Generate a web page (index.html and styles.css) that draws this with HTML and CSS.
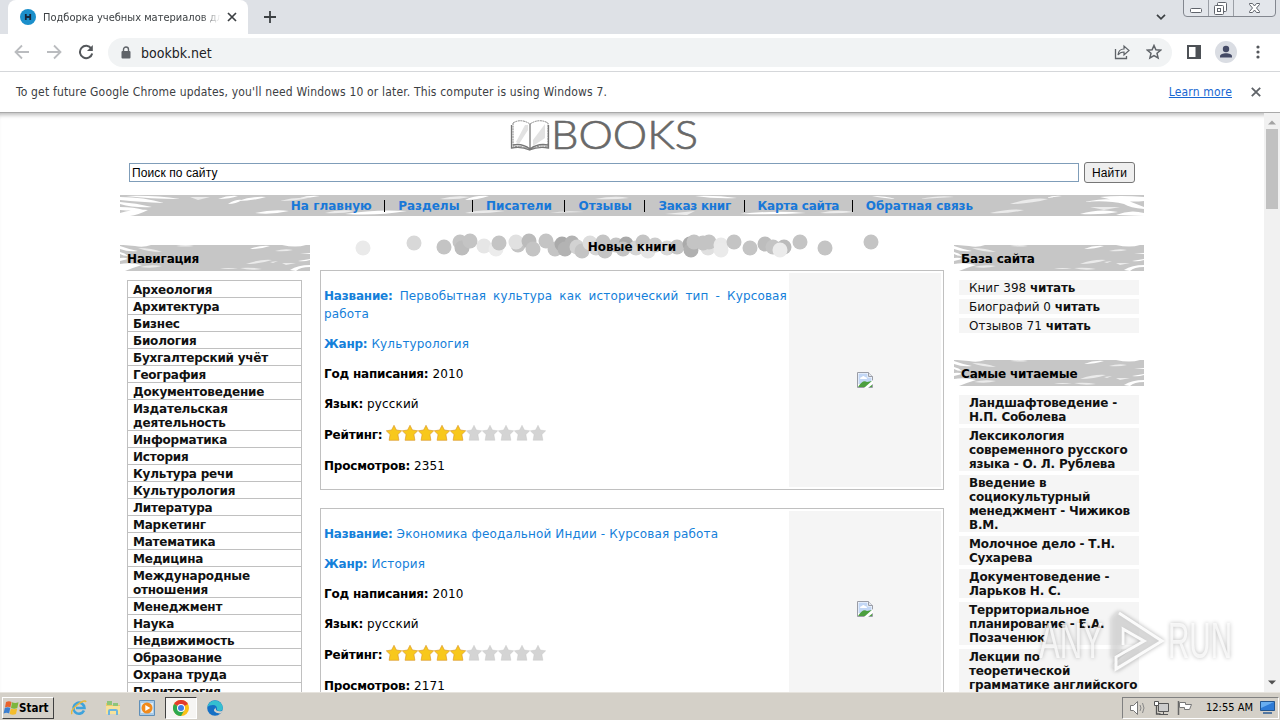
FILE: index.html
```html
<!DOCTYPE html>
<html lang="ru">
<head>
    <meta charset="UTF-8">
    <title>Подборка учебных материалов</title>
    <link rel="stylesheet" href="styles.css">
</head>
<body>
<svg class="defs" width="0" height="0">
    <symbol id="brush" viewBox="0 0 190 26" preserveAspectRatio="none">
        <rect width="190" height="26" fill="#c6c6c6"/>
        <g fill="#fff">
            <path d="M0 1q8 3 18 5-10 1-18-2zM0 7q5 1 8 4-5 0-8-2zM0 13q5-1 8 1l-8 2zM0 19q10-2 22 1-10 3-17 6H0zM3 0h28q-8 3-16 1zM0 22l12-1-8 5H0z"/>
            <path d="M130 4q10-4 20-3-9 3-20 3zM162 0h24q-10 3-24 0zM170 25q8-5 20-5v2q-10 0-14 4zM178 16l12-2v1q-6 2-12 1zM180 9l10-1v1z"/>
        </g>
        <g fill="#ebebeb">
            <path d="M18 3q14 0 24 4-14 0-24-4zM20 22q10-3 22-1-10 3-22 1zM56 1q10-2 18 0-9 1-18 0zM126 19q14-5 26-4-12 4-26 4zM120 23q12-1 22 1-12 2-22-1zM155 6q10-3 18-1-8 2-18 1zM162 18h14l-10 2zM100 24q8-2 18 0zM150 17l8-1-5 2z"/>
        </g>
    </symbol>
    <symbol id="star" viewBox="0 0 16 16">
        <path d="M8 .3l2.400 4.700 5.300.8-3.800 3.700 1 5.800H3.100l1-5.800L.3 5.800 5.600 5z"/>
    </symbol>
    <symbol id="broken" viewBox="0 0 16 16">
        <path d="M.5.5h11l4 4v11H.5z" fill="#fff" stroke="#9a9da6"/>
        <path d="M1.500 1.500h9v4h4V12h-13z" fill="#c3d7f5"/>
        <path d="M3 7q0-2 2-2 1-2 3 0 2 0 2 2z" fill="#fff"/>
        <path d="M1 15q5-8 9-5l5-1v6z" fill="#4c9f3f"/>
        <path d="M7 16l9-8v4l-5 4z" fill="#fff"/>
        <path d="M11.500.5v4h4" fill="#e5e8ee" stroke="#9a9da6"/>
    </symbol>
</svg>

<div class="tabstrip">
    <div class="tab">
        <svg class="favicon" viewBox="0 0 16 16"><circle cx="8" cy="8" r="8" fill="#1b8fcb"/><path d="M5.800 5v6M10.200 5v6M5.800 8h5" stroke="#14263c" stroke-width="1.800"/></svg>
        <span class="tab-title">Подборка учебных материалов для</span>
        <svg class="tab-close" viewBox="0 0 10 10"><path d="M1 1l8 8M9 1l-8 8" stroke="#3c4043" stroke-width="1.700"/></svg>
    </div>
    <svg class="new-tab" viewBox="0 0 12 12"><path d="M6 0v12M0 6h12" stroke="#3c4043" stroke-width="1.800"/></svg>
    <svg class="tab-search" viewBox="0 0 10 6"><path d="M1 .8l4 4 4-4" fill="none" stroke="#3c4043" stroke-width="1.700"/></svg>
    <svg class="win-controls" viewBox="0 0 94 18">
        <path d="M.5 0v13q0 3.500 3.500 3.500h85q3.500 0 3.500-3.500V0" fill="#e3e6eb" stroke="#83878f"/>
        <path d="M25.500 0v16M50.500 0v16" stroke="#9b9fa6"/>
        <g fill="#fff" stroke="#60646c">
            <rect x="7.500" y="8.500" width="11" height="4" rx="1"/>
            <rect x="34.500" y="2.500" width="9" height="9" rx="1"/>
            <rect x="31.500" y="5.500" width="9" height="9" rx="1"/>
            <rect x="34.500" y="8.500" width="3" height="3"/>
            <path d="M66.500 3.500h3l2 2.500 2-2.500h3v1l-3 3.500 3 3.500v1h-3l-2-2.500-2 2.500h-3v-1l3-3.500-3-3.500z"/>
        </g>
    </svg>
</div>

<div class="toolbar">
    <svg class="tool" viewBox="0 0 16 16"><path d="M15 8H2M8 1.500L1.500 8 8 14.500" fill="none" stroke="#babcbf" stroke-width="1.800"/></svg>
    <svg class="tool" viewBox="0 0 16 16"><path d="M1 8h13M8 1.500L14.500 8 8 14.500" fill="none" stroke="#babcbf" stroke-width="1.800"/></svg>
    <svg class="tool" viewBox="0 0 16 16"><path d="M13.300 4.500A6.200 6.200 0 1 0 14.200 9.500" fill="none" stroke="#54575b" stroke-width="2"/><path d="M14.800 1v6H9z" fill="#54575b"/></svg>
    <div class="omnibox">
        <svg class="lock" viewBox="0 0 10 13"><rect x="0.500" y="5" width="9" height="7.500" rx="1" fill="#5f6368"/><path d="M2.500 5V3.500a2.500 2.500 0 0 1 5 0V5" fill="none" stroke="#5f6368" stroke-width="1.400"/></svg>
        <span class="url">bookbk.net</span>
        <svg class="share" viewBox="0 0 16 16"><path d="M1.500 5v9.500h11V12" fill="none" stroke="#5f6368" stroke-width="1.300"/><path d="M4 11q.5-6 6-6V2l5 4.500-5 4.500V8Q6 8 4 11z" fill="none" stroke="#5f6368" stroke-width="1.200"/></svg>
        <svg class="mark" viewBox="0 0 16 16"><path d="M8 1.500l1.900 4.300 4.700.4-3.600 3.100 1.100 4.600L8 11.500l-4.100 2.400L5 9.300 1.400 6.200l4.700-.4z" fill="none" stroke="#5f6368" stroke-width="1.500"/></svg>
    </div>
    <svg class="panel" viewBox="0 0 14 14"><path d="M1 1h12v12H1z" fill="none" stroke="#4d5156" stroke-width="2"/><path d="M8.500 0H14v14H8.500z" fill="#4d5156"/></svg>
    <svg class="avatar" viewBox="0 0 22 22"><circle cx="11" cy="11" r="11" fill="#dadde3"/><circle cx="11" cy="8" r="3.200" fill="#454b66"/><path d="M5 16.500v-1.200c0-2 3-3 6-3s6 1 6 3v1.200z" fill="#454b66"/></svg>
    <svg class="dots" viewBox="0 0 4 14"><g fill="#54575b"><circle cx="2" cy="2" r="1.600"/><circle cx="2" cy="7" r="1.600"/><circle cx="2" cy="12" r="1.600"/></g></svg>
</div>

<div class="infobar">
    <span class="info-text">To get future Google Chrome updates, you'll need Windows 10 or later. This computer is using Windows 7.</span>
    <a class="info-link">Learn more</a>
    <svg class="info-close" viewBox="0 0 10 10"><path d="M.8.8l8.400 8.400M9.200.8L.8 9.200" stroke="#5f6368" stroke-width="1.800"/></svg>
</div>

<div class="viewport">
    <div class="page">
        <svg class="logo" viewBox="0 0 190 36">
            <path d="M3 5q8-5 17 1 9-6 18-1v24q-9-3-18 3-8-5-17-3z" fill="#fff" stroke="#888" stroke-width="1" stroke-dasharray="2 .6"/>
            <path d="M20 6v24M3 27q9-2 17 4 8-6 18-4M1.500 7v23q10-2 18 2 9-4 19-2V7" fill="none" stroke="#777" stroke-width="1.300"/>
            <path d="M23 22L35 6v14L23 28zM6 24l9-17h3v5L9 26z" fill="#e2e2e2"/>
            <text x="41" y="31" textLength="147" lengthAdjust="spacingAndGlyphs">BOOKS</text>
        </svg>

        <form class="search">
            <input class="search-field" type="text" value="Поиск по сайту">
            <button class="search-button" type="button">Найти</button>
        </form>

        <div class="menu">
            <svg class="menu-bg" viewBox="0 0 1024 21">
                <rect width="1024" height="21" fill="#c6c6c6"/>
                <g fill="#fff">
                    <path d="M0 2q24 0 44 6-24-1-44-3zM0 7q16 1 32 5-18 1-32-3zM0 12q14 0 24 3-12 1-24 0zM0 18q16-5 28-3-10 5-18 6H0zM6 1q28-1 54 3-30 0-54-3z"/>
                    <path d="M98 4q10-4 20-3-8 3-20 3zM108 9q8-5 14-4-6 4-14 4zM118 6q14-5 28-4-14 4-28 4zM180 3q8-3 20-2-10 2-20 2zM135 18q18-4 34-2-18 4-34 2zM225 19q30-5 62-3-30 5-62 3zM345 5q10-5 24-4-12 4-24 4zM575 1q20-1 42 2-22 1-42-2zM620 19q34-4 66-1-30 2-66 1zM752 1q14 0 24 3-14-1-24-3zM926 3q8-3 16-2zM960 19q20-6 38-2-16 3-38 2zM964 7q24-5 42-2l18 7v2q-14-1-20-5-16-4-40-2zM980 2q20-2 44 0v4q-20 2-44-4zM996 20q14-6 28-2v3z"/>
                </g>
                <g fill="#ebebeb">
                    <path d="M70 2h20l-12 3zM160 6q14-4 28-3-12 3-28 3zM205 18q14-4 30-2-14 3-30 2zM320 4q14-4 30-2-14 3-30 2zM345 18q16-4 40-2-20 3-40 2zM430 18q16-3 34-1zM475 4q20-4 34-1-16 2-34 1zM545 19l30-3-8 4zM700 18q16-4 34-1-16 2-34 1zM800 4q20-4 34-2zM890 9q22-7 38-5-18 5-38 5zM870 18q20-5 34-3-16 4-34 3zM970 12h30l-16 3z"/>
                </g>
            </svg>
            <a>На главную</a><i></i><a>Разделы</a><i></i><a>Писатели</a><i></i><a>Отзывы</a><i></i><a class="tight">Заказ книг</a><i></i><a class="tight">Карта сайта</a><i></i><a>Обратная связь</a>
        </div>

        <div class="columns">
            <div class="left">
                <div class="title"><svg class="title-bg"><use href="#brush"/></svg><span>Навигация</span></div>
                <ul class="nav">
                    <li>Археология</li>
                    <li>Архитектура</li>
                    <li>Бизнес</li>
                    <li>Биология</li>
                    <li>Бухгалтерский учёт</li>
                    <li>География</li>
                    <li>Документоведение</li>
                    <li>Издательская<br>деятельность</li>
                    <li>Информатика</li>
                    <li>История</li>
                    <li>Культура речи</li>
                    <li>Культурология</li>
                    <li>Литература</li>
                    <li>Маркетинг</li>
                    <li>Математика</li>
                    <li>Медицина</li>
                    <li>Международные<br>отношения</li>
                    <li>Менеджмент</li>
                    <li>Наука</li>
                    <li>Недвижимость</li>
                    <li>Образование</li>
                    <li>Охрана труда</li>
                    <li>Политология</li>
                </ul>
            </div>

            <div class="center">
                <div class="new-books">
                    <svg class="bubbles" viewBox="0 0 624 30">
                        <g fill="#c4c4c4">
                            <circle cx="94" cy="13" r="7.500" fill="#d8d8d8"/><circle cx="43" cy="18" r="7.500" fill="#eaeaea"/>
                            <circle cx="164" cy="16" r="7.500" fill="#e6e6e6"/><circle cx="176" cy="19" r="7.500" fill="#ececec"/>
                            <circle cx="124" cy="17" r="7.500"/><circle cx="140" cy="12" r="7.500"/><circle cx="142" cy="18" r="7.500" fill="#bdbdbd"/><circle cx="150" cy="11" r="7.500"/>
                            <circle cx="179" cy="13" r="7.500"/><circle cx="198" cy="15" r="7.500"/><circle cx="196" cy="12" r="7.500" fill="#e1e1e1"/><circle cx="209" cy="11" r="7.500" fill="#bbb"/><circle cx="213" cy="19" r="7.500"/>
                            <circle cx="226" cy="11" r="7.500"/><circle cx="235" cy="19" r="7.500"/><circle cx="242" cy="14" r="7.500" fill="#aaa"/><circle cx="252" cy="13" r="7.500" fill="#b3b3b3"/><circle cx="245" cy="19" r="7.500" fill="#b3b3b3"/><circle cx="257" cy="17" r="7.500" fill="#d2d2d2"/>
                            <circle cx="262" cy="21" r="7.500"/><circle cx="270" cy="13" r="7.500" fill="#ddd"/><circle cx="276" cy="18" r="7.500" fill="#d5d5d5"/><circle cx="283" cy="12" r="7.500"/><circle cx="285" cy="21" r="7.500"/><circle cx="296" cy="15" r="7.500"/><circle cx="306" cy="14" r="7.500" fill="#aaa"/><circle cx="303" cy="19" r="7.500"/>
                            <circle cx="316" cy="18" r="7.500" fill="#d5d5d5"/><circle cx="323" cy="12" r="7.500"/><circle cx="328" cy="21" r="7.500" fill="#e4e4e4"/><circle cx="335" cy="15" r="7.500" fill="#ccc"/><circle cx="347" cy="18" r="7.500" fill="#d8d8d8"/><circle cx="357" cy="17" r="7.500"/>
                            <circle cx="370" cy="14" r="7.500" fill="#aaa"/><circle cx="371" cy="20" r="7.500" fill="#b0b0b0"/><circle cx="374" cy="12" r="7.500"/><circle cx="388" cy="18" r="7.500" fill="#e0e0e0"/><circle cx="383" cy="13" r="7.500"/><circle cx="389" cy="12" r="7.500"/><circle cx="401" cy="15" r="7.500" fill="#e9e9e9"/><circle cx="401" cy="20" r="7.500" fill="#eaeaea"/>
                            <circle cx="414" cy="12" r="7.500"/><circle cx="430" cy="18" r="7.500"/><circle cx="445" cy="14" r="7.500" fill="#bdbdbd"/><circle cx="453" cy="17" r="7.500"/><circle cx="464" cy="17" r="7.500" fill="#bbb"/><circle cx="460" cy="20" r="7.500" fill="#ebebeb"/><circle cx="480" cy="12" r="7.500"/><circle cx="505" cy="18" r="7.500"/><circle cx="551" cy="12" r="7.500"/>
                        </g>
                    </svg>
                    <span>Новые книги</span>
                </div>

                <div class="book">
                    <div class="book-text">
                        <p class="link"><b>Название:</b> Первобытная культура как исторический тип - Курсовая работа</p>
                        <p class="link"><b>Жанр:</b> Культурология</p>
                        <p><b>Год написания:</b> 2010</p>
                        <p><b>Язык:</b> русский</p>
                        <p class="rating"><b>Рейтинг:</b>
                            <svg class="stars" viewBox="0 0 160 16"><g class="on"><use href="#star" width="16"/><use href="#star" x="16" width="16"/><use href="#star" x="32" width="16"/><use href="#star" x="48" width="16"/><use href="#star" x="64" width="16"/></g><g class="off"><use href="#star" x="80" width="16"/><use href="#star" x="96" width="16"/><use href="#star" x="112" width="16"/><use href="#star" x="128" width="16"/><use href="#star" x="144" width="16"/></g></svg>
                        </p>
                        <p><b>Просмотров:</b> 2351</p>
                    </div>
                    <div class="cover"><svg class="broken"><use href="#broken"/></svg></div>
                </div>

                <div class="book">
                    <div class="book-text">
                        <p class="link"><b>Название:</b> Экономика феодальной Индии - Курсовая работа</p>
                        <p class="link"><b>Жанр:</b> История</p>
                        <p><b>Год написания:</b> 2010</p>
                        <p><b>Язык:</b> русский</p>
                        <p class="rating"><b>Рейтинг:</b>
                            <svg class="stars" viewBox="0 0 160 16"><g class="on"><use href="#star" width="16"/><use href="#star" x="16" width="16"/><use href="#star" x="32" width="16"/><use href="#star" x="48" width="16"/><use href="#star" x="64" width="16"/></g><g class="off"><use href="#star" x="80" width="16"/><use href="#star" x="96" width="16"/><use href="#star" x="112" width="16"/><use href="#star" x="128" width="16"/><use href="#star" x="144" width="16"/></g></svg>
                        </p>
                        <p><b>Просмотров:</b> 2171</p>
                    </div>
                    <div class="cover"><svg class="broken"><use href="#broken"/></svg></div>
                </div>
            </div>

            <div class="right">
                <div class="title"><svg class="title-bg"><use href="#brush"/></svg><span>База сайта</span></div>
                <ul class="list">
                    <li>Книг 398 <b>читать</b></li>
                    <li>Биографий 0 <b>читать</b></li>
                    <li>Отзывов 71 <b>читать</b></li>
                </ul>
                <div class="title"><svg class="title-bg"><use href="#brush"/></svg><span>Самые читаемые</span></div>
                <ul class="list popular">
                    <li>Ландшафтоведение -<br>Н.П. Соболева</li>
                    <li>Лексикология<br>современного русского<br>языка - О. Л. Рублева</li>
                    <li>Введение в<br>социокультурный<br>менеджмент - Чижиков<br>В.М.</li>
                    <li>Молочное дело - Т.Н.<br>Сухарева</li>
                    <li>Документоведение -<br>Ларьков Н. С.</li>
                    <li>Территориальное<br>планирование - Е.А.<br>Позаченюк</li>
                    <li>Лекции по<br>теоретической<br>грамматике английского<br>языка</li>
                </ul>
            </div>
        </div>
    </div>
    <div class="scrollbar">
        <svg class="arrow" viewBox="0 0 8 5"><path d="M0 4.500L4 .5l4 4z" fill="#a3a3a3"/></svg>
        <div class="thumb"></div>
        <svg class="arrow down" viewBox="0 0 8 5"><path d="M0 .5h8l-4 4z" fill="#505050"/></svg>
    </div>
</div>

<div class="taskbar">
    <div class="start">
        <svg class="flag" viewBox="0 0 16 16"><path d="M3 2q3-1.500 5.500 0L7.400 7.500Q5 6 2 7.500z" fill="#e8622c"/><path d="M9 2.200q3 1.500 6.500 0L14.300 8q-3 1.500-6.300 0z" fill="#7db63c"/><path d="M1.800 8q3-1.500 5.500 0l-1.200 5.500q-2.500-1.500-5.500 0z" fill="#3c7fd0"/><path d="M7.800 8.500q3 1.500 6.400 0L13 14q-3 1.500-6.400 0z" fill="#f4bd2c"/></svg>
        <span>Start</span>
    </div>
    <div class="task"><svg viewBox="0 0 16 16"><path d="M13 10.500A5.500 5.500 0 1 1 13.500 8H5" fill="none" stroke="#3fa3dc" stroke-width="2.600"/><path d="M1 14Q-1 11 6 5q8-6 9-3" fill="none" stroke="#e8b93c" stroke-width="1.500"/></svg></div>
    <div class="task"><svg viewBox="0 0 16 16"><path d="M1 3h5l1 2h8v9H1z" fill="#eccb69"/><path d="M2 1h5v4H2zM8 3h5v3H8z" fill="#8ec57a"/><path d="M1 6h14v8H1z" fill="#f7e29a"/><path d="M4 15v-4q0-1 1-1h6q1 0 1 1v4" fill="none" stroke="#6eb5dd" stroke-width="2"/></svg></div>
    <div class="task"><svg viewBox="0 0 16 16"><path d="M.5.5h15v15H.5z" fill="#a9cbe8" stroke="#5f8fb8"/><path d="M2 3h12v10H2z" fill="#dcebf5"/><circle cx="8" cy="8" r="5.500" fill="#f08a1c"/><path d="M6.300 5v6l5-3z" fill="#fff"/></svg></div>
    <div class="task active"><svg viewBox="0 0 16 16"><circle cx="8" cy="8" r="8" fill="#fbc116"/><path d="M8 8L1.070 4A8 8 0 0 1 14.930 4z" fill="#e33b2e"/><path d="M8 8L1.070 4A8 8 0 0 0 8 16l3.500-6z" fill="#2da94f"/><circle cx="8" cy="8" r="4" fill="#fff"/><circle cx="8" cy="8" r="3" fill="#3f7de8"/></svg></div>
    <div class="task"><svg viewBox="0 0 16 16"><circle cx="8" cy="8" r="7.800" fill="#1670c5"/><path d="M.3 7A7.800 7.800 0 0 1 15.800 8q0 3-3.500 3-2.800 0-2.300-2Q10 5 6 5 2 5 .3 7z" fill="#35bfd0"/><path d="M9 7.500q-1 1 .5 3 2.500 1.500 6 .3l-1.500 2.500q-5 .5-7-2.300-.5-2 2-3.500z" fill="#d6d2ca"/></svg></div>
    <div class="tray">
        <svg class="t1" viewBox="0 0 18 16"><path d="M1.500 5.500h3l4-4v13l-4-4h-3z" fill="#fff" stroke="#777"/><path d="M11 5q2 3 0 6M13.500 3q3 5 0 10" fill="none" stroke="#888"/></svg>
        <svg class="t2" viewBox="0 0 16 16"><path d="M5.500 3.500h10v8h-10z" fill="#ccc" stroke="#555"/><path d="M6 14.500h9M10.500 12v2" stroke="#555"/><path d="M1.500 1.500h4v4h-4z" fill="#fff" stroke="#555"/><path d="M3.500 5v9h4" fill="none" stroke="#555" stroke-width="1.300"/></svg>
        <svg class="t3" viewBox="0 0 16 16"><path d="M1.500 1v14" stroke="#666" stroke-width="1.500"/><path d="M2.500 2.500h6v2h6l-2 5h-5v-2h-5z" fill="#fff" stroke="#777"/></svg>
        <span class="clock">12:55 AM</span>
        <svg class="desk" viewBox="0 0 15 13"><path d="M.5.5h14v9H.5z" fill="#2e7bd6" stroke="#24568f"/><path d="M1 1h13L1 7z" fill="#69aef0"/><path d="M3 12h9" stroke="#2a5b95" stroke-width="1.500"/></svg>
    </div>
</div>

<svg class="watermark" viewBox="0 0 200 70">
    <g class="wm-text">
        <text x="0" y="53" textLength="64" lengthAdjust="spacingAndGlyphs">ANY</text>
        <text x="129" y="53" textLength="64" lengthAdjust="spacingAndGlyphs">RUN</text>
    </g>
    <path class="wm-mark" d="M72 54V13l7-7 45 30-45 30-7-5 30-25-20-14v24z"/>
    <path class="wm-line" d="M80 8l43 28-46 28V52l28-16-21-12v16"/>
</svg>
</body>
</html>
```
FILE: styles.css
```css
html, body{
    margin:0;
    height:720px;
    overflow:hidden;
}
body{
    display:flex;
    flex-direction:column;
    position:relative;
    background-color:white;
    font-family:"DejaVu Sans", sans-serif;
    font-size:12px;
}
b{
    letter-spacing:-.2px;
}
svg{
    display:block;
    flex:none;
}
.defs{
    position:absolute;
}

/* browser */
.tabstrip{
    box-sizing:border-box;
    height:34px;
    flex:none;
    display:flex;
    align-items:center;
    background-color:#dee1e6;
    padding-left:8px;
}
.tab{
    box-sizing:border-box;
    width:240px;
    height:34px;
    border-radius:8px 8px 0 0;
    background-color:white;
    display:flex;
    align-items:center;
    padding:0 11px 0 12px;
}
.favicon{
    width:16px;
    height:16px;
}
.tab-title{
    width:178px;
    margin:0 6px 0 7px;
    overflow:hidden;
    white-space:nowrap;
    font-family:"DejaVu Sans Condensed", "DejaVu Sans", sans-serif;
    font-stretch:condensed;
    font-size:11px;
    color:#3c4043;
    -webkit-mask-image:linear-gradient(to right, #000 158px, transparent 178px);
}
.tab-close{
    width:10px;
    height:10px;
}
.new-tab{
    width:12px;
    height:12px;
    margin-left:16px;
}
.tab-search{
    width:10px;
    height:6px;
    margin-left:auto;
}
.win-controls{
    width:94px;
    height:18px;
    align-self:flex-start;
    margin:0 3px 0 17px;
}
.toolbar{
    box-sizing:border-box;
    height:38px;
    flex:none;
    display:flex;
    align-items:center;
    padding:0 18px 1px 14px;
    border-bottom:1px solid #d5d7da;
}
.tool{
    width:16px;
    height:16px;
    margin-right:16px;
}
.omnibox{
    box-sizing:border-box;
    flex:1;
    height:29px;
    border-radius:15px;
    background-color:#f1f3f4;
    display:flex;
    align-items:center;
    padding:0 10px 0 13px;
    margin-left:-2px;
}
.lock{
    width:10px;
    height:13px;
}
.url{
    font-family:"DejaVu Sans Condensed", "DejaVu Sans", sans-serif;
    font-stretch:condensed;
    font-size:14px;
    margin:1px auto 0 10px;
    color:#202124;
}
.share, .mark{
    width:16px;
    height:16px;
}
.mark{
    margin-left:16px;
}
.panel{
    width:14px;
    height:14px;
    margin-left:15px;
}
.avatar{
    width:22px;
    height:22px;
    margin:0 19px 0 14px;
}
.dots{
    width:4px;
    height:14px;
    margin-right:2px;
}
.infobar{
    box-sizing:border-box;
    height:41px;
    flex:none;
    display:flex;
    align-items:center;
    padding:0 19px 0 16px;
    font-family:"DejaVu Sans Condensed", "DejaVu Sans", sans-serif;
    font-stretch:condensed;
    font-size:12px;
    letter-spacing:.17px;
    color:#3c4043;
    border-bottom:1px solid #a9a9a9;
}
.info-text{
    white-space:nowrap;
}
.info-link{
    margin-left:auto;
    margin-right:19px;
    color:#1967d2;
    text-decoration:underline;
}
.info-close{
    width:10px;
    height:10px;
}

/* site */
.viewport{
    height:579px;
    flex:none;
    display:flex;
    overflow:hidden;
    box-shadow:inset 0 5px 4px -3px #bbb;
}
.page{
    width:1024px;
    margin:0 auto;
}
.logo{
    width:190px;
    height:36px;
    margin:5px 0 0 390px;
    overflow:visible;
}
.logo text{
    font-family:Lato, sans-serif;
    font-size:40px;
    font-weight:300;
    fill:#686868;
    stroke:#686868;
    stroke-width:.7;
}
.search{
    display:flex;
    align-items:center;
    height:21px;
    margin:8px 0 12px 9px;
}
.search-field{
    box-sizing:border-box;
    width:950px;
    height:19px;
    padding:0 2px;
    border:1px solid #7f9db9;
    font-family:"Liberation Sans", Arial, sans-serif;
    font-size:12px;
    letter-spacing:.1px;
}
.search-button{
    box-sizing:border-box;
    width:51px;
    height:21px;
    margin-left:5px;
    padding:0;
    border:1px solid #767676;
    border-radius:3px;
    background-color:#efefef;
    font-family:"Liberation Sans", Arial, sans-serif;
    font-size:12px;
    letter-spacing:.2px;
}
.menu{
    position:relative;
    display:flex;
    justify-content:center;
    align-items:center;
    height:21px;
    font-weight:bold;
    color:#1878d8;
    white-space:nowrap;
}
.menu-bg{
    position:absolute;
    left:0;
    top:0;
    width:1024px;
    height:21px;
}
.menu a, .menu i{
    position:relative;
}
.menu .tight{
    letter-spacing:-.25px;
}
.menu i{
    width:1px;
    height:12px;
    margin:0 13px 0 12.5px;
    background-color:#000;
}
.columns{
    display:flex;
    gap:10px;
}
.left, .right{
    width:190px;
    flex:none;
    padding-top:29px;
}
.title{
    position:relative;
    height:26px;
    line-height:28px;
    padding-left:7px;
    font-weight:bold;
    letter-spacing:-.15px;
}
.title-bg{
    position:absolute;
    left:0;
    top:0;
    width:190px;
    height:26px;
}
.title span{
    position:relative;
}
ul{
    margin:0;
    padding:0;
    list-style:none;
}
.nav{
    width:173px;
    margin:9px 0 0 7px;
    border:1px solid #c0c0c0;
    border-top:none;
    font-weight:bold;
    letter-spacing:-.22px;
}
.nav li{
    border-top:1px solid #c0c0c0;
    padding:2px 0 0 5px;
    line-height:14px;
    white-space:nowrap;
    color:#111;
}
.center{
    width:624px;
    flex:none;
}
.new-books{
    position:relative;
    height:54px;
    text-align:center;
    line-height:62px;
    font-weight:bold;
}
.new-books span{
    position:relative;
}
.bubbles{
    position:absolute;
    left:0;
    top:14px;
    width:624px;
    height:30px;
}
.book{
    box-sizing:border-box;
    display:flex;
    padding:2px;
    margin-bottom:18px;
    border:1px solid #c0c0c0;
}
.book-text{
    width:463px;
    padding:2px 2px 0 1px;
    letter-spacing:.15px;
}
.book p{
    margin:12px 0;
    line-height:18px;
    text-align:justify;
}
.book p.link{
    color:#1480da;
}
.book p.rating{
    display:flex;
    align-items:center;
    height:20px;
}
.stars{
    width:160px;
    height:16px;
    margin:-5px 0 0 4px;
}
.on{
    fill:#f8c81c;
    stroke:#dd9c30;
    stroke-width:.7;
}
.off{
    fill:#d4d4d4;
    stroke:#c6c6c6;
    stroke-width:.4;
}
.cover{
    width:152px;
    display:flex;
    align-items:center;
    justify-content:center;
    background-color:#f5f5f5;
}
.broken{
    width:16px;
    height:16px;
}
.list{
    width:180px;
    margin:9px 0 28px 5px;
    display:flex;
    flex-direction:column;
    gap:5px;
}
.list li{
    padding:1px 0 0 10px;
    margin-bottom:-1px;
    line-height:14px;
    white-space:nowrap;
    background-color:#f5f5f5;
    color:#111;
}
.popular{
    font-weight:bold;
    letter-spacing:-.2px;
}
.scrollbar{
    width:16px;
    background-color:#f1f1f1;
    display:flex;
    flex-direction:column;
    align-items:center;
}
.arrow{
    width:8px;
    height:5px;
    margin-top:7px;
}
.thumb{
    width:12px;
    height:80px;
    margin-top:4px;
    background-color:#c1c1c1;
}
.down{
    margin:auto 0 7px;
}

/* taskbar */
.taskbar{
    box-sizing:border-box;
    height:28px;
    flex:none;
    display:flex;
    align-items:center;
    padding:2px 0 0 2px;
    background-color:#d4d0c8;
    border-top:1px solid #e6e3dd;
    font-family:"DejaVu Sans Condensed", "DejaVu Sans", sans-serif;
    font-stretch:condensed;
}
.start{
    box-sizing:border-box;
    width:52px;
    height:22px;
    display:flex;
    align-items:center;
    border:1px solid;
    border-color:#fff #404040 #404040 #fff;
    font-weight:bold;
    font-size:11.5px;
    margin-right:9px;
}
.flag{
    width:16px;
    height:16px;
}
.task{
    box-sizing:border-box;
    width:32px;
    height:22px;
    display:flex;
    align-items:center;
    justify-content:center;
    margin-right:2px;
}
.task svg{
    width:16px;
    height:16px;
}
.active{
    border:1px solid;
    border-color:#404040 #fff #fff #404040;
    background-color:#f6f5f3;
}
.tray{
    box-sizing:border-box;
    width:157px;
    height:22px;
    margin:0 1px 0 auto;
    padding-left:6px;
    display:flex;
    align-items:center;
    border:1px solid;
    border-color:#808080 #fff #fff #808080;
    font-size:11px;
}
.t1{
    width:18px;
    height:16px;
    margin-right:6px;
}
.t2, .t3{
    width:16px;
    height:16px;
    margin-right:8px;
}
.clock{
    white-space:nowrap;
    margin-left:5px;
}
.desk{
    width:15px;
    height:13px;
    margin-left:auto;
    margin-right:3px;
}
.watermark{
    position:absolute;
    left:1039px;
    top:605px;
    width:200px;
    height:70px;
    filter:drop-shadow(0 0 2px rgba(0,0,0,.35));
}
.wm-text{
    font-family:"Liberation Sans", sans-serif;
    font-size:50px;
    fill:rgba(255,255,255,.75);
}
.wm-mark{
    fill:rgba(225,225,225,.55);
}
.wm-line{
    fill:none;
    stroke:rgba(255,255,255,.9);
    stroke-width:3;
}
```
